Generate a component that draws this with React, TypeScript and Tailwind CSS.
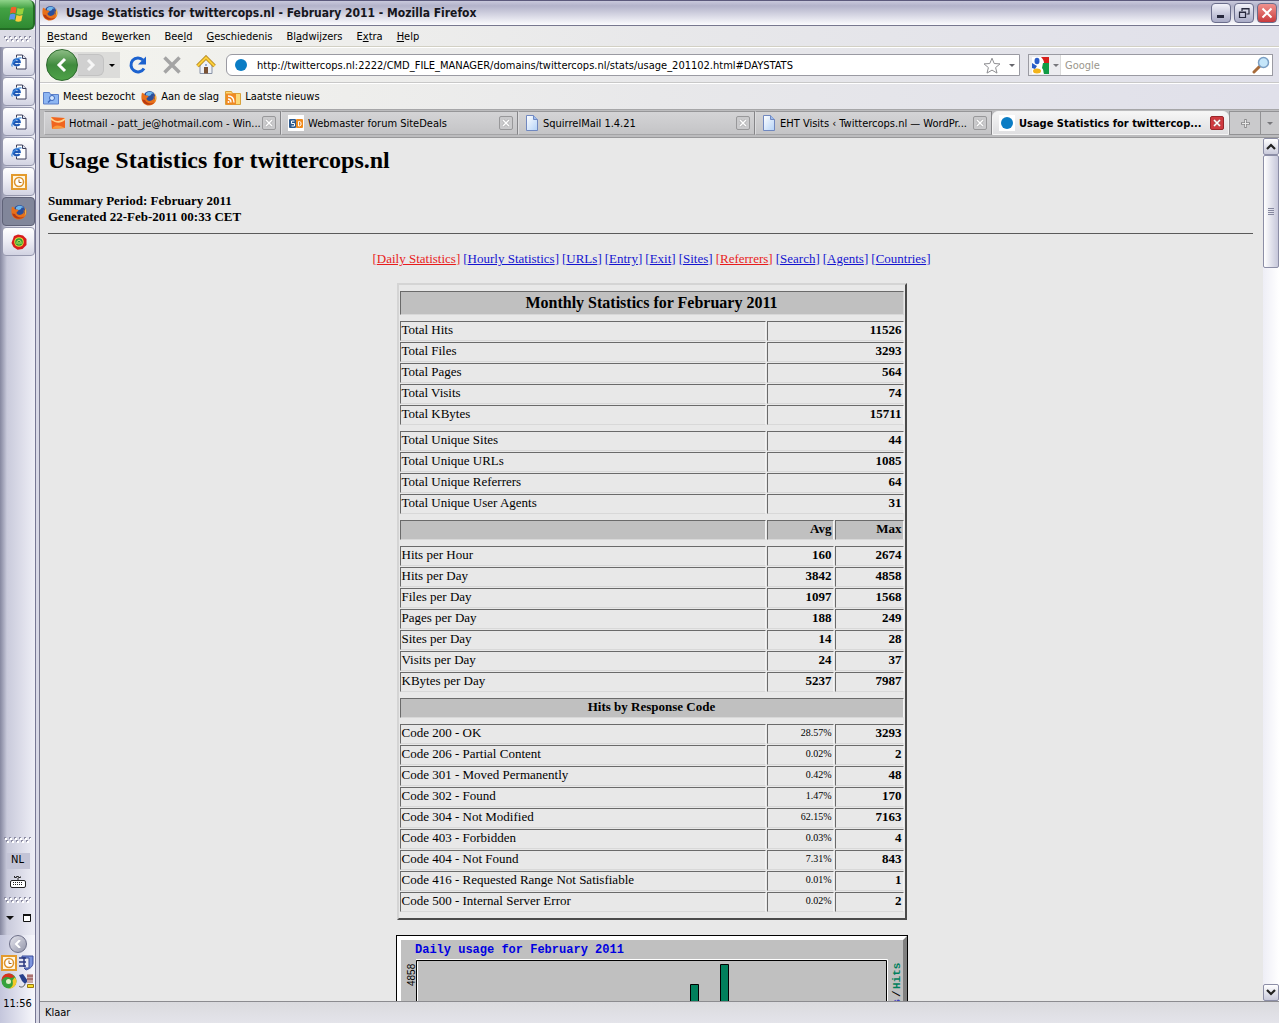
import type { ReactNode } from "react";
import clsx from "clsx";

const UI = "font-['DejaVu_Sans_Condensed','DejaVu_Sans',sans-serif]";
const SERIF = "font-['Liberation_Serif',serif]";

const FirefoxIcon = ({ size = 16 }: { size?: number }) => (
  <svg width={size} height={size} viewBox="0 0 16 16" className="shrink-0">
    <circle cx="8.5" cy="7" r="6" fill="#2a4f9c" />
    <path d="M5 3.500C7 1 11 1 13 4c-2-1-3 0-3 1l-2 1-3-.5z" fill="#6fb7ec" />
    <path
      d="M1 2.500c.6.8 1.400.9 2.500 1C3 5 4.500 5.500 6 5.500l1.500.5C7.500 7.500 5.500 7.500 5.500 9c1 2.500 4.500 2.500 6.500.500 1-1.200 1-2.500.5-4 2 1 1.500 3-.2 5.300C15 9 15 5 13.500 2.800c2.500 2.700 2.500 7 .5 9.700-3 4-9 4-12 .2C-.2 9.500.2 5.500 1 2.500z"
      fill="#e8701a"
    />
    <path d="M1 9.500c1.500 5.500 8.500 7 12.500 3-3 1.600-8 1.200-9.500-2.500z" fill="#b93a12" />
    <path d="M13.500 3.500c2 2.500 1.800 6 .2 8.500.5-3 .6-6-.2-8.500z" fill="#ffc23a" />
  </svg>
);

const IeIcon = () => (
  <svg width="18" height="18" viewBox="0 0 18 18">
    <path d="M6.500 2h6l3.500 3.500v10.500h-9.500z" fill="#fff" stroke="#3c3f5c" />
    <path d="M12.500 2v3.500h3.500" fill="#dfe4f2" stroke="#3c3f5c" />
    <circle cx="6.500" cy="9" r="4.500" fill="#e4effc" />
    <path d="M9.500 11c-1 2-5.500 2-6-1.500C3.300 5.500 9.500 5 9.800 9H4.500" fill="none" stroke="#1d56b4" strokeWidth="2" />
    <path d="M2.500 13.500C0 12.500 5 4.500 11.500 5" fill="none" stroke="#3f8be0" strokeWidth="1.200" />
  </svg>
);

const ClockIcon = () => (
  <svg width="16" height="16" viewBox="0 0 16 16">
    <rect x="1" y="1" width="14" height="14" fill="#fff6df" stroke="#e39a2d" strokeWidth="2" />
    <circle cx="8" cy="8" r="4.500" fill="#fff" stroke="#dd922b" strokeWidth="1.500" />
    <path d="M8 5.500V8.500h2.500" fill="none" stroke="#a86a1a" />
  </svg>
);

const RoseIcon = () => (
  <svg width="16" height="16" viewBox="0 0 16 16">
    <path d="M3 2l4-1.500 5 1L15.500 5v6l-4 4-5 .8L2.500 13 .5 9z" fill="#d91c1c" />
    <circle cx="8" cy="8" r="4.800" fill="#e5dc3a" />
    <circle cx="8" cy="8" r="3.800" fill="#2f9a38" />
    <path d="M6 10V7.500l2-1.500 2 1.500V10M8 8v2.500" fill="none" stroke="#c8f060" />
  </svg>
);

const PageIcon = () => (
  <svg width="14" height="16" viewBox="0 0 14 16" className="shrink-0">
    <defs>
      <linearGradient id="page" x1="0" y1="0" x2="1" y2="1">
        <stop offset="0" stopColor="#fff" />
        <stop offset="1" stopColor="#b4d2f8" />
      </linearGradient>
    </defs>
    <path d="M1.500.5h7l4 4v11h-11z" fill="url(#page)" stroke="#7088c0" />
    <path d="M8.500.5v4h4" fill="#9dbdf0" stroke="#7088c0" />
  </svg>
);

const DotIcon = () => (
  <span className="flex size-4 shrink-0 items-center justify-center bg-white">
    <span className="size-3 rounded-full bg-[#0a7cc4]" />
  </span>
);

const HotmailIcon = () => (
  <svg width="14" height="14" viewBox="0 0 14 14" className="shrink-0">
    <path d="M0 1l14 1v10L1 13z" fill="#f0641e" />
    <path d="M0 1c4 5 8 5 14 1v2c-5 4-9 3-14 0z" fill="#ffd28a" />
    <path d="M1 13c2-4 6-5 13-1z" fill="#f99a3c" />
  </svg>
);

const SiteDealsIcon = () => (
  <svg width="16" height="16" viewBox="0 0 16 16" className="shrink-0">
    <path d="M0 0h16v16H0z" fill="#fff" />
    <rect x="1" y="4" width="7" height="9" rx="1" fill="#2e5a8e" />
    <rect x="8" y="4" width="7" height="9" rx="1" fill="#f18a1c" />
    <path d="M6.500 6H3.500v2.500h3V11h-3" fill="none" stroke="#fff" />
    <path d="M10.500 6.500h1l1.500 1v2.500l-1.500 1h-1z" fill="none" stroke="#fff" />
  </svg>
);

const Grip = () => (
  <svg width="27" height="6" viewBox="0 0 27 6" className="shrink-0">
    {[0, 1, 2, 3, 4, 5].map((i) => (
      <g key={i}>
        <path d={`M${i * 5 + 1} 1h2v2h-2zM${i * 5 + 3} 4h2v2h-2z`} fill="#fff" />
        <path d={`M${i * 5} 0h2v1h-1v1h-1zM${i * 5 + 2} 3h2v1h-1v1h-1z`} fill="#8c8ca2" />
      </g>
    ))}
  </svg>
);

const taskButtons: { label: string; icon: ReactNode; active?: boolean }[] = [
  { label: "Internet Explorer 1", icon: <IeIcon /> },
  { label: "Internet Explorer 2", icon: <IeIcon /> },
  { label: "Internet Explorer 3", icon: <IeIcon /> },
  { label: "Internet Explorer 4", icon: <IeIcon /> },
  { label: "Outlook", icon: <ClockIcon /> },
  { label: "Firefox", icon: <FirefoxIcon />, active: true },
  { label: "Messenger", icon: <RoseIcon /> },
];

const Taskbar = () => (
  <aside className="flex w-9 shrink-0 flex-col border-r border-[#777794] bg-linear-to-r from-[#85879f] via-[#c9cadb] via-20% to-[#eeeef6]">
    <button
      aria-label="Start"
      className="flex h-[30px] w-[35px] shrink-0 items-center justify-center rounded-r-md border-r-2 border-b-2 border-[#236b25] bg-linear-to-b from-[#8fd48a] via-[#43a244] via-30% to-[#2f8a31]"
    >
      <svg width="18" height="18" viewBox="0 0 18 18">
        <path d="M3 2.500c2-1 4-1 5.500 0l-1 6c-1.500-1-3.500-1-5.500 0z" fill="#f0602a" />
        <path d="M9.500 3c2 1 4 1 6.500 0l-1.300 6c-2 1-4 1-6.200 0z" fill="#9ad23c" />
        <path d="M2 9.500c2-1 4-1 5.500 0l-1 5.500c-1.500-1-3.500-1-5.500 0z" fill="#5b93ec" />
        <path d="M8.500 10c2 1 4 1 6 0l-1.200 6c-2 1-4 1-6 0z" fill="#fccb3c" />
      </svg>
    </button>
    <div className="flex h-[17px] shrink-0 items-center justify-center bg-[#dcdce6]">
      <Grip />
    </div>
    {taskButtons.map(({ label, icon, active }) => (
      <button
        key={label}
        aria-label={label}
        className={clsx(
          "mb-px ml-0.5 flex h-[29px] w-[33px] shrink-0 items-center justify-center rounded-sm border",
          active
            ? "border-[#5f6278] bg-[#81869a]"
            : "border-[#9698ae] bg-linear-to-b from-white via-[#ececf4] to-[#d2d3e2]"
        )}
      >
        {icon}
      </button>
    ))}
    <div className="flex-1" />
    <div className={clsx("flex flex-col items-center text-[11px]", UI)}>
      <Grip />
      <span className="mt-2.5 flex h-4 w-6 items-center justify-center bg-[#c3c4d6]">NL</span>
      <svg width="16" height="14" viewBox="0 0 16 14" className="mt-1.5">
        <path d="M4.500 1v1.500h2V1.500h2v1h2v-1M8 3v2" fill="none" stroke="#222" />
        <rect x=".5" y="5.500" width="15" height="7" rx="1.500" fill="#fff" stroke="#222" />
        <path d="M3 7.500h10M3 9.500h10" stroke="#222" strokeDasharray="1 1" />
      </svg>
      <div className="mt-2">
        <Grip />
      </div>
      <div className="flex h-8 w-full items-center justify-between pr-1 pb-0.5 pl-1.5">
        <svg width="8" height="4" viewBox="0 0 8 4">
          <path d="M0 0h8L4 4z" fill="#111" />
        </svg>
        <svg width="8" height="8" viewBox="0 0 8 8">
          <path d="M.5 1h7v6.500h-7z" fill="#fff" stroke="#111" />
          <path d="M0 1h8" stroke="#111" strokeWidth="2" />
        </svg>
      </div>
    </div>
    <div
      className={clsx(
        "flex flex-col items-center bg-linear-to-r from-[#c4c6dc] to-[#f8f8fc] pb-[11px] text-[11px]",
        UI
      )}
    >
      <button
        aria-label="Verborgen pictogrammen weergeven"
        className="flex size-[18px] items-center justify-center rounded-full border border-[#6d6f88] bg-linear-to-br from-[#e6e6ee] to-[#9496aa]"
      >
        <svg width="8" height="8" viewBox="0 0 8 8">
          <path d="M6 0L2 4l4 4" fill="none" stroke="#fff" strokeWidth="2" />
        </svg>
      </button>
      <div className="mt-0.5 grid grid-cols-2 gap-x-px gap-y-0.5">
        <ClockIcon />
        <svg width="16" height="16" viewBox="0 0 16 16">
          <path d="M4 1h11v7c0 4-4 6-7 7l-2-2h5V3H4z" fill="#7b93dd" stroke="#3b4c9a" />
          <path d="M1 3h7M1 7h7M1 11h7M6 2v10" stroke="#2d3a80" strokeWidth="1.500" />
        </svg>
        <svg width="16" height="16" viewBox="0 0 16 16">
          <circle cx="8" cy="8" r="7.500" fill="#37a23c" />
          <path d="M8 .5C3 .5.500 4 .5 8c2-4 5-5 9-3l4-1C12 1.500 10 .5 8 .5z" fill="#d9321e" />
          <path d="M15.500 8c0 5-4 8-8 7.500 4-1 5-4 4-8l2-3c1.500 1 2 2 2 3.500z" fill="#f5c829" />
          <circle cx="7.500" cy="8.500" r="2.500" fill="#dff0c8" />
        </svg>
        <svg width="16" height="16" viewBox="0 0 16 16">
          <path d="M1 2l4-1 5 7-3 3-3-3z" fill="#27408c" />
          <path d="M9 1h6v9H9z" fill="#c9a7a7" />
          <path d="M9 3h6M9 6h6" stroke="#8a3c3c" />
          <path d="M1 13c2 2 5 1 6-2" fill="none" stroke="#555" />
          <path d="M9.500 11.500h6v3h-6z" fill="#f6de2c" stroke="#9a7a10" />
        </svg>
      </div>
      <span className="mt-[7px]">11:56</span>
    </div>
  </aside>
);

const windowButton = "flex size-5 items-center justify-center rounded-sm border border-[#6b6e8c]";

const TitleBar = () => (
  <header className="flex h-[26px] shrink-0 items-center border-t border-b border-t-[#5c5a7c] border-b-[#77778f] bg-linear-to-b from-[#c9c9dc] via-[#b3b3ca] via-20% to-[#fcfcfe] pr-0.5 pl-0.5">
    <FirefoxIcon />
    <h1 className={clsx("ml-2 flex-1 text-[12px] font-bold text-[#16161c]", UI)}>
      Usage Statistics for twittercops.nl - February 2011 - Mozilla Firefox
    </h1>
    <div className="flex gap-[3px]">
      <button aria-label="Minimaliseren" className={clsx(windowButton, "bg-linear-to-b from-[#f2f2fa] to-[#a9abc6]")}>
        <svg width="12" height="12" viewBox="0 0 12 12">
          <path d="M2 9.500h7" stroke="#26283c" strokeWidth="3" />
        </svg>
      </button>
      <button aria-label="Vorig formaat" className={clsx(windowButton, "bg-linear-to-b from-[#f2f2fa] to-[#a9abc6]")}>
        <svg width="12" height="12" viewBox="0 0 12 12">
          <path d="M4 4V1.500h7V7H8.500M4 2h7M1.500 5h6v5.500h-6zM1 5.500h7" fill="none" stroke="#26283c" strokeWidth="1.200" />
        </svg>
      </button>
      <button aria-label="Sluiten" className={clsx(windowButton, "bg-linear-to-b from-[#f0918e] to-[#c8383c]")}>
        <svg width="12" height="12" viewBox="0 0 12 12">
          <path d="M1.500 1.500l9 9M10.500 1.500l-9 9" stroke="#fff" strokeWidth="2" />
        </svg>
      </button>
    </div>
  </header>
);

const menus = [
  ["", "B", "estand"],
  ["Be", "w", "erken"],
  ["Bee", "l", "d"],
  ["", "G", "eschiedenis"],
  ["Bl", "a", "dwijzers"],
  ["E", "x", "tra"],
  ["", "H", "elp"],
];

const MenuBar = () => (
  <nav className="flex h-[21px] shrink-0 items-center gap-3.5 border-b border-[#d2d0c4] pt-0.5 pl-[7px]">
    {menus.map(([before, key, after]) => (
      <button key={before + key + after}>
        {before}
        <span className="underline">{key}</span>
        {after}
      </button>
    ))}
  </nav>
);

const Caret = ({ className }: { className?: string }) => (
  <svg width="6" height="3" viewBox="0 0 6 3" className={clsx("shrink-0", className)}>
    <path d="M0 0h6L3 3z" fill="currentColor" />
  </svg>
);

const NavBar = () => (
  <div className="flex h-9 shrink-0 items-center border-t border-b border-t-white border-b-[#c8c8c8] pr-1.5 pl-1.5">
    <div className="flex h-[26px] items-center rounded-l-full rounded-r-md bg-[#dcdcda]">
      <button
        aria-label="Vorige"
        className="flex size-8 items-center justify-center rounded-full border border-[#2e6a2e] bg-linear-to-b from-[#8cbd85] via-[#3f8b3d] to-[#4ea248]"
      >
        <svg width="14" height="16" viewBox="0 0 14 16">
          <path d="M10 2L4 8l6 6" fill="none" stroke="#fff" strokeWidth="3" />
        </svg>
      </button>
      <button
        aria-label="Volgende"
        className="flex h-[22px] w-[26px] items-center justify-center rounded-r-md border border-l-0 border-[#c2c2c2] bg-[#d0d0d0]"
      >
        <svg width="12" height="12" viewBox="0 0 12 12">
          <path d="M3 1l5 5-5 5" fill="none" stroke="#f6f6f6" strokeWidth="3" />
        </svg>
      </button>
      <button aria-label="Recente pagina's" className="flex h-[22px] w-4 items-center justify-center">
        <Caret />
      </button>
    </div>
    <button aria-label="Vernieuwen" className="ml-2">
      <svg width="20" height="20" viewBox="0 0 20 20">
        <path d="M16 13.500A7 7 0 1 1 15 5" fill="none" stroke="#1c62cf" strokeWidth="3" />
        <path d="M18 1.500v8h-8z" fill="#1c62cf" />
      </svg>
    </button>
    <button aria-label="Stoppen" className="ml-3.5">
      <svg width="20" height="20" viewBox="0 0 20 20">
        <path d="M2.500 2.500l15 15M17.500 2.500l-15 15" stroke="#a4a4a4" strokeWidth="3.500" />
      </svg>
    </button>
    <button aria-label="Startpagina" className="ml-3.5">
      <svg width="20" height="20" viewBox="0 0 20 20">
        <path d="M4 10v8.500h12V10l-6-6z" fill="#eef1f6" stroke="#8892a6" />
        <path d="M1.500 11L10 2.500l8.500 8.500" fill="none" stroke="#a8770e" strokeWidth="3.600" />
        <path d="M1.500 11L10 2.500l8.500 8.500" fill="none" stroke="#fbcf3c" strokeWidth="2.200" />
        <path d="M8 12h4v6.500H8z" fill="#7a5234" />
        <path d="M9 9.500h2v1H9z" fill="#3c67b4" />
      </svg>
    </button>
    <div className="ml-2.5 flex h-[22px] flex-1 items-center rounded-l-md border border-[#9a9aa2] bg-white pr-1 pl-1.5">
      <DotIcon />
      <input
        aria-label="Adres"
        className="ml-2 min-w-0 flex-1 bg-transparent pt-0.5 outline-none"
        defaultValue="http://twittercops.nl:2222/CMD_FILE_MANAGER/domains/twittercops.nl/stats/usage_201102.html#DAYSTATS"
      />
      <button aria-label="Bladwijzer maken">
        <svg width="18" height="17" viewBox="0 0 18 17">
          <path
            d="M9 1.200l2.200 5.300 5.800.4-4.400 3.700 1.400 5.500L9 13.100l-5 3 1.400-5.500L1 6.900l5.800-.4z"
            fill="#fff"
            stroke="#8e8e92"
          />
        </svg>
      </button>
      <button aria-label="Geschiedenis tonen" className="ml-2 text-[#66666c]">
        <Caret />
      </button>
    </div>
    <div className="ml-2 flex h-[22px] w-[245px] items-center border border-[#9a9aa2] bg-white pr-0.5">
      <button
        aria-label="Zoekmachine"
        className="flex h-full w-8 items-center gap-1 border-r border-[#dadada] bg-[#ececf0] pl-[3px] text-[#77777c]"
      >
        <svg width="17" height="17" viewBox="0 0 17 17">
          <path d="M0 0h17v17H0z" fill="#fff" />
          <path d="M9 0h8v6h-5c0-2-1-4-3-6z" fill="#d81f1b" />
          <path d="M11 6h6v11h-5c-1-2 0-4-2-6z" fill="#119c45" />
          <ellipse cx="5" cy="4" rx="2.500" ry="3.300" fill="#2a5cc8" />
          <path d="M0 6l5 3-2 3-3-1z" fill="#2a5cc8" />
          <ellipse cx="5" cy="14" rx="4" ry="2.500" fill="#f2b31c" />
        </svg>
        <Caret />
      </button>
      <input
        aria-label="Zoeken"
        placeholder="Google"
        className="ml-1 min-w-0 flex-1 pt-0.5 outline-none placeholder:text-[#9a968c]"
      />
      <button aria-label="Zoeken starten">
        <svg width="18" height="18" viewBox="0 0 18 18">
          <path d="M2 16l5.500-5.500" stroke="#a86b3a" strokeWidth="3" strokeLinecap="round" />
          <circle cx="11.500" cy="6.500" r="5" fill="#c5e6fa" stroke="#7b9fc4" strokeWidth="1.500" />
        </svg>
      </button>
    </div>
  </div>
);

const BookmarksBar = () => (
  <div className="flex h-[26px] shrink-0 items-center gap-1.5 border-t border-white pt-0.5 pl-[3px]">
    <a href="#" className="flex items-center gap-1">
      <svg width="16" height="16" viewBox="0 0 16 16">
        <path d="M.5 2.500h6l1 2h8v9.500H.500z" fill="#8db6f2" stroke="#5a7fc8" />
        <circle cx="9" cy="8" r="2.500" fill="#d6e8ff" stroke="#3b68bd" />
        <path d="M7.500 10L5 12.500" stroke="#3b68bd" strokeWidth="1.500" />
      </svg>
      Meest bezocht
    </a>
    <a href="#" className="flex items-center gap-1">
      <FirefoxIcon />
      Aan de slag
    </a>
    <a href="#" className="flex items-center gap-1">
      <svg width="16" height="16" viewBox="0 0 16 16">
        <path d="M.5 1.500h6l1 2h8V14.500H.500z" fill="#fbd978" stroke="#d8a13a" />
        <path d="M1 3.500h10v11H1z" fill="#f08a24" />
        <path d="M3 6c4 0 6 2.500 6 6.500M3 9c2 0 3 1.500 3 3.500" fill="none" stroke="#fff" strokeWidth="1.300" />
        <circle cx="3.500" cy="12" r="1" fill="#fff" />
      </svg>
      Laatste nieuws
    </a>
  </div>
);

const tabs: { title: string; icon: ReactNode; active?: boolean }[] = [
  { title: "Hotmail - patt_je@hotmail.com - Win...", icon: <HotmailIcon /> },
  { title: "Webmaster forum SiteDeals", icon: <SiteDealsIcon /> },
  { title: "SquirrelMail 1.4.21", icon: <PageIcon /> },
  { title: "EHT Visits ‹ Twittercops.nl — WordPr...", icon: <PageIcon /> },
  { title: "Usage Statistics for twittercop...", icon: <DotIcon />, active: true },
];

const TabBar = () => (
  <div className="flex h-[29px] shrink-0 items-end border-t border-b border-t-[#a6a6a8] border-b-[#98989a] bg-[#bcbcbe] pb-0.5 pl-1">
    {tabs.map(({ title, icon, active }) => (
      <div
        key={title}
        className={clsx(
          "flex h-6 min-w-0 flex-1 items-center border pr-1 pl-1.5",
          active
            ? "rounded-t-md border-[#f4f4f4] bg-linear-to-b from-[#f6f6f6] to-[#dfdfe1] font-bold"
            : "border-t-[#969698] border-r-[#858588] border-b-[#a4a4a6] border-l-[#dcdcde] bg-linear-to-b from-[#d4d4d6] to-[#c4c4c6]"
        )}
      >
        <button className="flex min-w-0 flex-1 items-center gap-1 whitespace-nowrap">
          {icon}
          <span className="pt-0.5">{title}</span>
        </button>
        <button
          aria-label={`Tabblad ${title} sluiten`}
          className={clsx(
            "flex size-3.5 shrink-0 items-center justify-center rounded-xs border",
            active ? "border-[#98262a] bg-[#cf3a40]" : "border-[#98989a] bg-[#cacacc]"
          )}
        >
          <svg width="8" height="8" viewBox="0 0 8 8">
            <path d="M1 1l6 6M7 1L1 7" stroke="#8a8a8c" strokeWidth="2.500" opacity=".5" />
            <path d="M1 1l6 6M7 1L1 7" stroke="#fff" strokeWidth="1.500" />
          </svg>
        </button>
      </div>
    ))}
    <button
      aria-label="Nieuw tabblad"
      className="flex h-6 w-8 items-center justify-center border border-[#929294] bg-[#cacacc]"
    >
      <svg width="9" height="9" viewBox="0 0 9 9">
        <path d="M4.500 0v9M0 4.500h9" stroke="#8a8a8c" strokeWidth="2.500" />
        <path d="M4.500 1v7M1 4.500h7" stroke="#e8e8e8" />
      </svg>
    </button>
    <button
      aria-label="Alle tabbladen"
      className="flex h-6 w-[18px] items-center justify-center border-y border-[#929294] bg-[#cacacc] text-[#77777a]"
    >
      <Caret />
    </button>
  </div>
);

const links: [string, boolean?][] = [
  ["Daily Statistics", true],
  ["Hourly Statistics"],
  ["URLs"],
  ["Entry"],
  ["Exit"],
  ["Sites"],
  ["Referrers", true],
  ["Search"],
  ["Agents"],
  ["Countries"],
];

const totals = [
  ["Total Hits", "11526"],
  ["Total Files", "3293"],
  ["Total Pages", "564"],
  ["Total Visits", "74"],
  ["Total KBytes", "15711"],
];

const uniques = [
  ["Total Unique Sites", "44"],
  ["Total Unique URLs", "1085"],
  ["Total Unique Referrers", "64"],
  ["Total Unique User Agents", "31"],
];

const averages = [
  ["Hits per Hour", "160", "2674"],
  ["Hits per Day", "3842", "4858"],
  ["Files per Day", "1097", "1568"],
  ["Pages per Day", "188", "249"],
  ["Sites per Day", "14", "28"],
  ["Visits per Day", "24", "37"],
  ["KBytes per Day", "5237", "7987"],
];

const codes = [
  ["Code 200 - OK", "28.57%", "3293"],
  ["Code 206 - Partial Content", "0.02%", "2"],
  ["Code 301 - Moved Permanently", "0.42%", "48"],
  ["Code 302 - Found", "1.47%", "170"],
  ["Code 304 - Not Modified", "62.15%", "7163"],
  ["Code 403 - Forbidden", "0.03%", "4"],
  ["Code 404 - Not Found", "7.31%", "843"],
  ["Code 416 - Requested Range Not Satisfiable", "0.01%", "1"],
  ["Code 500 - Internal Server Error", "0.02%", "2"],
];

const cell = "h-5 border border-t-[#6a6a6a] border-r-[#f4f4f4] border-b-[#d8d8d8] border-l-[#6a6a6a] px-px pt-0 pb-0.5";
const number = clsx(cell, "text-right font-bold");
const heading = clsx(cell, "bg-[#c0c0c0]");

const Spacer = () => (
  <tr>
    <td colSpan={3} className="h-1 p-0" />
  </tr>
);

const TotalRows = ({ rows }: { rows: string[][] }) => (
  <>
    {rows.map(([label, value]) => (
      <tr key={label}>
        <td className={cell}>{label}</td>
        <td colSpan={2} className={number}>
          {value}
        </td>
      </tr>
    ))}
  </>
);

const MonthlyTable = () => (
  <table className="mx-auto mt-4 w-[510px] table-fixed border-separate border-spacing-px border-2 border-t-[#d4d4d4] border-r-[#4a4a4a] border-b-[#4a4a4a] border-l-[#d4d4d4] text-[13px] leading-4">
    <colgroup>
      <col />
      <col className="w-[67px]" />
      <col className="w-[69px]" />
    </colgroup>
    <tbody>
      <Spacer />
      <tr>
        <th
          colSpan={3}
          className="h-6 border border-t-[#6a6a6a] border-r-[#d8d8d8] border-b-[#d8d8d8] border-l-[#6a6a6a] bg-[#c0c0c0] p-0 text-[16px] leading-5"
        >
          Monthly Statistics for February 2011
        </th>
      </tr>
      <Spacer />
      <TotalRows rows={totals} />
      <Spacer />
      <TotalRows rows={uniques} />
      <Spacer />
      <tr>
        <th className={heading} />
        <th className={clsx(heading, "text-right")}>Avg</th>
        <th className={clsx(heading, "text-right")}>Max</th>
      </tr>
      <Spacer />
      {averages.map(([label, avg, max]) => (
        <tr key={label}>
          <td className={cell}>{label}</td>
          <td className={number}>{avg}</td>
          <td className={number}>{max}</td>
        </tr>
      ))}
      <Spacer />
      <tr>
        <th colSpan={3} className={heading}>
          Hits by Response Code
        </th>
      </tr>
      <Spacer />
      {codes.map(([label, percent, hits]) => (
        <tr key={label}>
          <td className={cell}>{label}</td>
          <td className={clsx(cell, "text-right text-[10px]")}>{percent}</td>
          <td className={number}>{hits}</td>
        </tr>
      ))}
      <Spacer />
    </tbody>
  </table>
);

const DailyChart = () => (
  <svg width="512" height="400" viewBox="0 0 512 400" className="mx-auto mt-[15px] shrink-0">
    <path d="M0 0h512v400H0z" fill="#000" />
    <path d="M1 1h510v398H1z" fill="#fff" />
    <path d="M511 1v398H1l5-5h500V6z" fill="#808080" />
    <path d="M5 5h502v390H5z" fill="#c0c0c0" />
    <text x="19" y="18" fill="#0000e0" fontSize="12" fontWeight="bold" fontFamily="Liberation Mono, monospace">
      Daily usage for February 2011
    </text>
    <path d="M20.500 400V25.500h470V400" fill="none" stroke="#000" />
    <path d="M21.500 400V26.500M20 24.500h471.500V400" fill="none" stroke="#fff" />
    <text transform="translate(19 51) rotate(-90)" fontSize="10" fontFamily="Liberation Sans, sans-serif">
      4858
    </text>
    <path d="M294.500 49.500h8V400h-8zM324.500 29.500h8V400h-8z" fill="#00805c" stroke="#000" />
    <g fontSize="11" fontWeight="bold" fontFamily="Liberation Mono, monospace">
      <text transform="translate(504 54) rotate(-90)" fill="#00805c">
        Hits
      </text>
      <text transform="translate(504 62) rotate(-90)">/</text>
      <text transform="translate(504 97) rotate(-90)" fill="#4040c0">
        Files
      </text>
    </g>
  </svg>
);

const StatsPage = () => (
  <main className={clsx("min-w-0 flex-1 overflow-hidden bg-[#e8e8e8] px-2 text-black", SERIF)}>
    <h2 className="mt-2 text-[24px] leading-7 font-bold">Usage Statistics for twittercops.nl</h2>
    <p className="mt-[19px] text-[13px] leading-4 font-bold">
      Summary Period: February 2011
      <br />
      Generated 22-Feb-2011 00:33 CET
    </p>
    <hr className="mt-2 mr-0.5 border-[#5a5a5a]" />
    <div className="mt-[17px] flex justify-center gap-[3px] text-[13px] leading-4">
      {links.map(([name, visited]) => (
        <a key={name} href="#" className={clsx("underline", visited ? "text-[#e81c1c]" : "text-[#1414d0]")}>
          [{name}]
        </a>
      ))}
    </div>
    <MonthlyTable />
    <DailyChart />
  </main>
);

const scrollButton =
  "flex h-[17px] w-4 shrink-0 items-center justify-center rounded-xs border border-[#8c8ea6] bg-linear-to-b from-white to-[#c9cadb]";

const Scrollbar = () => (
  <div className="flex w-4 shrink-0 flex-col bg-linear-to-r from-[#eeeef6] to-white">
    <button aria-label="Omhoog" className={scrollButton}>
      <svg width="10" height="7" viewBox="0 0 10 7">
        <path d="M1 6l4-4 4 4" fill="none" stroke="#222" strokeWidth="2.200" />
      </svg>
    </button>
    <div className="flex h-[113px] items-center justify-center rounded-xs border border-[#8c8ea6] bg-linear-to-r from-white to-[#c6c7da]">
      <svg width="6" height="8" viewBox="0 0 6 8">
        <path d="M0 .5h6M0 2.500h6M0 4.500h6M0 6.500h6" stroke="#85879f" />
      </svg>
    </div>
    <div className="flex-1" />
    <button aria-label="Omlaag" className={scrollButton}>
      <svg width="10" height="7" viewBox="0 0 10 7">
        <path d="M1 1l4 4 4-4" fill="none" stroke="#222" strokeWidth="2.200" />
      </svg>
    </button>
  </div>
);

export default function App() {
  return (
    <div className="flex h-screen overflow-hidden">
      <Taskbar />
      <div className="w-1 shrink-0 border-r border-[#77778f] bg-[#d8d8e6]" />
      <div
        className={clsx(
          "flex min-w-0 flex-1 flex-col bg-linear-to-r from-[#f4f4ee] via-[#e8e8ea] via-50% to-[#e0e0ea] text-[11px] text-black",
          UI
        )}
      >
        <TitleBar />
        <MenuBar />
        <NavBar />
        <BookmarksBar />
        <TabBar />
        <div className="flex min-h-0 flex-1">
          <StatsPage />
          <Scrollbar />
        </div>
        <footer className="flex h-[22px] shrink-0 items-center border-t border-[#8c8c90] bg-linear-to-b from-[#dadade] to-[#e4e4ea] pt-0.5 pl-[5px]">
          Klaar
        </footer>
      </div>
    </div>
  );
}
